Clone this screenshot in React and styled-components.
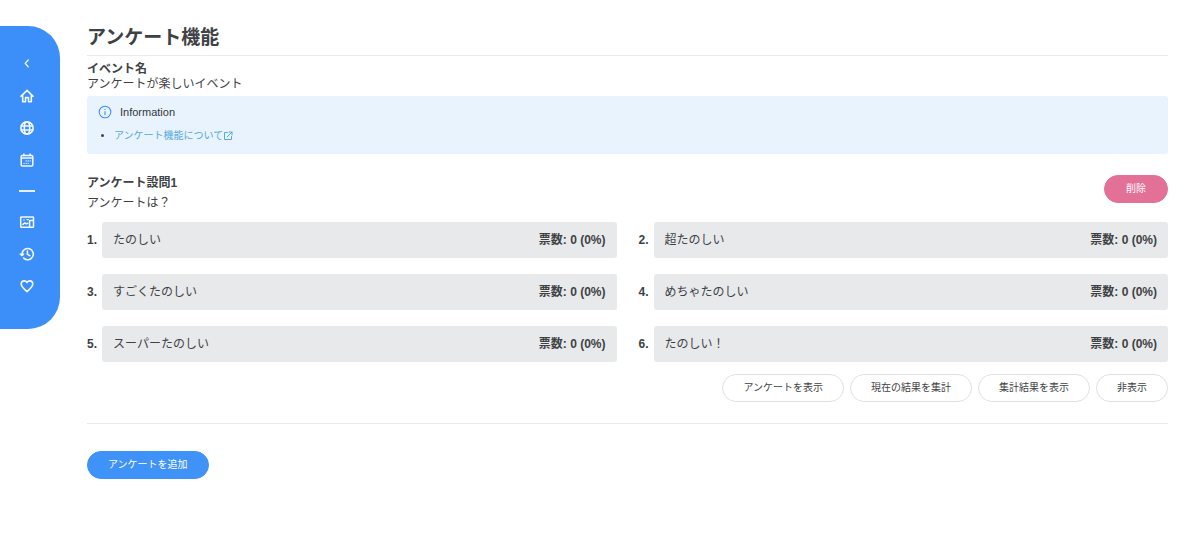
import styled, { createGlobalStyle } from 'styled-components';

const GlobalStyle = createGlobalStyle`
  * {
    box-sizing: border-box;
  }
  body {
    margin: 0;
    background: #ffffff;
    color: #3e4244;
    font-family: 'Liberation Sans', 'Noto Sans CJK JP', sans-serif;
    font-size: 12px;
    line-height: 16px;
  }
  h1, h2, h3, p, ul, ol {
    margin: 0;
    padding: 0;
  }
`;

const Root = styled.div`
  display: flex;
  align-items: flex-start;
  padding-top: 26px;
`;

const Sidebar = styled.nav`
  display: flex;
  flex-direction: column;
  align-items: center;
  flex: none;
  gap: 16px;
  width: 60px;
  padding: 30px 6px 35px 0;
  border-radius: 0 32px 32px 0;
  background: #3c8ff8;
`;

const SideLink = styled.a`
  display: flex;
  color: #f4f9ff;
`;

const SideButton = styled.button`
  display: flex;
  padding: 0;
  border: 0;
  background: none;
  color: #f4f9ff;
  cursor: pointer;
`;

const SideDivider = styled.hr`
  width: 16px;
  height: 2px;
  margin: 6px 0;
  border: 0;
  background: #e4f0ff;
`;

const Icon = styled.svg`
  width: ${(props) => props.$size || 16}px;
  height: ${(props) => props.$size || 16}px;
  fill: none;
  stroke: currentColor;
  stroke-width: ${(props) => props.$stroke || 1.6};
  stroke-linecap: round;
  stroke-linejoin: round;
`;

const Main = styled.main`
  flex: 1;
  min-width: 0;
  padding: 0 32px 32px 27px;
`;

const PageTitle = styled.h1`
  padding-bottom: 5px;
  border-bottom: 1px solid #e9eaeb;
  font-size: 19px;
  line-height: 24px;
`;

const EventInfo = styled.section`
  padding: 6px 0 4px;
  line-height: 15px;
`;

const EventLabel = styled.h2`
  font-size: 12px;
`;

const InfoBox = styled.section`
  padding: 8px 11px 10px;
  border-radius: 3px;
  background: #e8f3fd;
`;

const InfoTitle = styled.h3`
  display: flex;
  align-items: center;
  gap: 8px;
  font-size: 11px;
  font-weight: normal;
  color: #34383b;

  svg {
    color: #3c8ff8;
  }
`;

const InfoList = styled.ul`
  margin-top: 8px;
  padding-left: 16px;
  font-size: 10px;
`;

const InfoLink = styled.a`
  display: inline-flex;
  align-items: center;
  color: #55a9dc;
  text-decoration: none;
`;

const Question = styled.section`
  padding: 21px 0;
  border-bottom: 1px solid #e9eaeb;
`;

const QuestionHeader = styled.header`
  display: flex;
  align-items: flex-start;
  justify-content: space-between;
`;

const QuestionTitle = styled.h2`
  font-size: 12px;
`;

const QuestionText = styled.p`
  margin-top: 4px;
`;

const OptionList = styled.ol`
  display: grid;
  grid-template-columns: 1fr 1fr;
  gap: 16px 22px;
  margin-top: 11px;
  list-style: none;
`;

const OptionItem = styled.li`
  display: flex;
  align-items: center;
`;

const OptionNumber = styled.span`
  width: 15px;
  font-weight: bold;
`;

const OptionBody = styled.div`
  display: flex;
  flex: 1;
  align-items: center;
  justify-content: space-between;
  height: 36px;
  padding: 0 11px;
  border-radius: 3px;
  background: #e8e9eb;
`;

const VoteCount = styled.span`
  font-weight: bold;
`;

const Button = styled.button`
  height: 28px;
  padding: 0 20px;
  border: 1px solid ${(props) => props.$border || '#dfe1e3'};
  border-radius: 14px;
  background: ${(props) => props.$background || '#ffffff'};
  color: ${(props) => props.$color || '#3e4244'};
  font-family: inherit;
  font-size: 10px;
  line-height: 16px;
  cursor: pointer;
`;

const DeleteButton = styled(Button)`
  min-width: 64px;
`;

const ButtonRow = styled.div`
  display: flex;
  justify-content: flex-end;
  gap: 6px;
  margin-top: 12px;
`;

const Footer = styled.footer`
  padding-top: 27px;
`;

const HomeIcon = () => (
  <Icon viewBox="0 0 16 16" aria-hidden="true">
    <path d="M1.9 8.3 8 2.4l6.1 5.9M3.7 7.2v6.5h2.8V9.6h3v4.1h2.8V7.2" />
  </Icon>
);

const GlobeIcon = () => (
  <Icon viewBox="0 0 16 16" aria-hidden="true">
    <circle cx="8" cy="8" r="6.1" />
    <ellipse cx="8" cy="8" rx="2.7" ry="6.1" />
    <path d="M2.3 6h11.4M2.3 10h11.4" />
  </Icon>
);

const CalendarIcon = () => (
  <Icon viewBox="0 0 16 16" $stroke={1.5} aria-hidden="true">
    <rect x="2.2" y="3.4" width="11.6" height="10.6" rx="1" />
    <path d="M2.4 6h11.2M4.9 1.9v1.6M11.1 1.9v1.6" />
    <path
      d="M7.1 8.9h.1M9.1 8.9h.1M11.1 8.9h.1M5 11.3h.1M7.1 11.3h.1M9.1 11.3h.1"
      strokeWidth="1.2"
    />
  </Icon>
);

const MediaIcon = () => (
  <Icon viewBox="0 0 16 16" $stroke={1.5} aria-hidden="true">
    <rect x="1.7" y="2.9" width="12.8" height="10.4" rx="0.6" />
    <path d="M4.9 6.1h.1M3.9 10.4l1.9-1.5 1.6 1 1.4-.6M14.2 6.6h-3.6v6.4" />
    <path d="M8 5.6h1.4" strokeWidth="1.1" />
  </Icon>
);

const HistoryIcon = () => (
  <Icon viewBox="0 0 16 16" aria-hidden="true">
    <path d="M3.1 7.6a5.6 5.6 0 1 1 1.6 4.5M8.4 5v3.4l2.4 1.2" />
    <path d="M1.1 8h3.7L3 9.7z" fill="currentColor" strokeWidth="1.2" />
  </Icon>
);

const HeartIcon = () => (
  <Icon viewBox="0 0 16 16" aria-hidden="true">
    <path d="M8 13.6C4.6 10.8 2.2 8.8 2.2 6.1c0-1.9 1.4-3.2 3.1-3.2 1.1 0 2.1.6 2.7 1.6.6-1 1.6-1.6 2.7-1.6 1.7 0 3.1 1.3 3.1 3.2 0 2.7-2.4 4.7-5.8 7.5z" />
  </Icon>
);

const options = ['たのしい', '超たのしい', 'すごくたのしい', 'めちゃたのしい', 'スーパーたのしい', 'たのしい！'];

const App = () => {
  return (
    <>
      <GlobalStyle />
      <Root>
        <Sidebar>
          <SideButton type="button" aria-label="閉じる">
            <Icon viewBox="0 0 16 16" $stroke={1.3} aria-hidden="true">
              <path d="M9.2 4 6.2 7.4l3 3.4" />
            </Icon>
          </SideButton>
          <SideLink href="#home" aria-label="ホーム">
            <HomeIcon />
          </SideLink>
          <SideLink href="#site" aria-label="サイト">
            <GlobeIcon />
          </SideLink>
          <SideLink href="#calendar" aria-label="カレンダー">
            <CalendarIcon />
          </SideLink>
          <SideDivider />
          <SideLink href="#media" aria-label="メディア">
            <MediaIcon />
          </SideLink>
          <SideLink href="#history" aria-label="履歴">
            <HistoryIcon />
          </SideLink>
          <SideLink href="#favorite" aria-label="お気に入り">
            <HeartIcon />
          </SideLink>
        </Sidebar>

        <Main>
          <PageTitle>アンケート機能</PageTitle>
          <EventInfo>
            <EventLabel>イベント名</EventLabel>
            <p>アンケートが楽しいイベント</p>
          </EventInfo>

          <InfoBox>
            <InfoTitle>
              <Icon viewBox="0 0 14 14" $size={14} $stroke={1.1} aria-hidden="true">
                <circle cx="7" cy="7" r="5.8" />
                <path d="M7 6.5v3.3M7 4.2v.3" />
              </Icon>
              Information
            </InfoTitle>
            <InfoList>
              <li>
                <InfoLink href="#about">
                  アンケート機能について
                  <Icon viewBox="0 0 10 10" $size={10} $stroke={1} aria-hidden="true">
                    <path d="M4.5 1.5h-3v7h7v-3M6 1h3v3M9 1 4.3 5.7" />
                  </Icon>
                </InfoLink>
              </li>
            </InfoList>
          </InfoBox>

          <Question>
            <QuestionHeader>
              <div>
                <QuestionTitle>アンケート設問1</QuestionTitle>
                <QuestionText>アンケートは？</QuestionText>
              </div>
              <DeleteButton type="button" $background="#e27097" $border="#e27097" $color="#ffffff">
                削除
              </DeleteButton>
            </QuestionHeader>
            <OptionList>
              {options.map((option, index) => (
                <OptionItem key={option}>
                  <OptionNumber>{index + 1}.</OptionNumber>
                  <OptionBody>
                    <span>{option}</span>
                    <VoteCount>票数: 0 (0%)</VoteCount>
                  </OptionBody>
                </OptionItem>
              ))}
            </OptionList>
            <ButtonRow>
              <Button type="button">アンケートを表示</Button>
              <Button type="button">現在の結果を集計</Button>
              <Button type="button">集計結果を表示</Button>
              <Button type="button">非表示</Button>
            </ButtonRow>
          </Question>

          <Footer>
            <Button type="button" $background="#3f93f8" $border="#3f93f8" $color="#ffffff">
              アンケートを追加
            </Button>
          </Footer>
        </Main>
      </Root>
    </>
  );
};

export default App;
